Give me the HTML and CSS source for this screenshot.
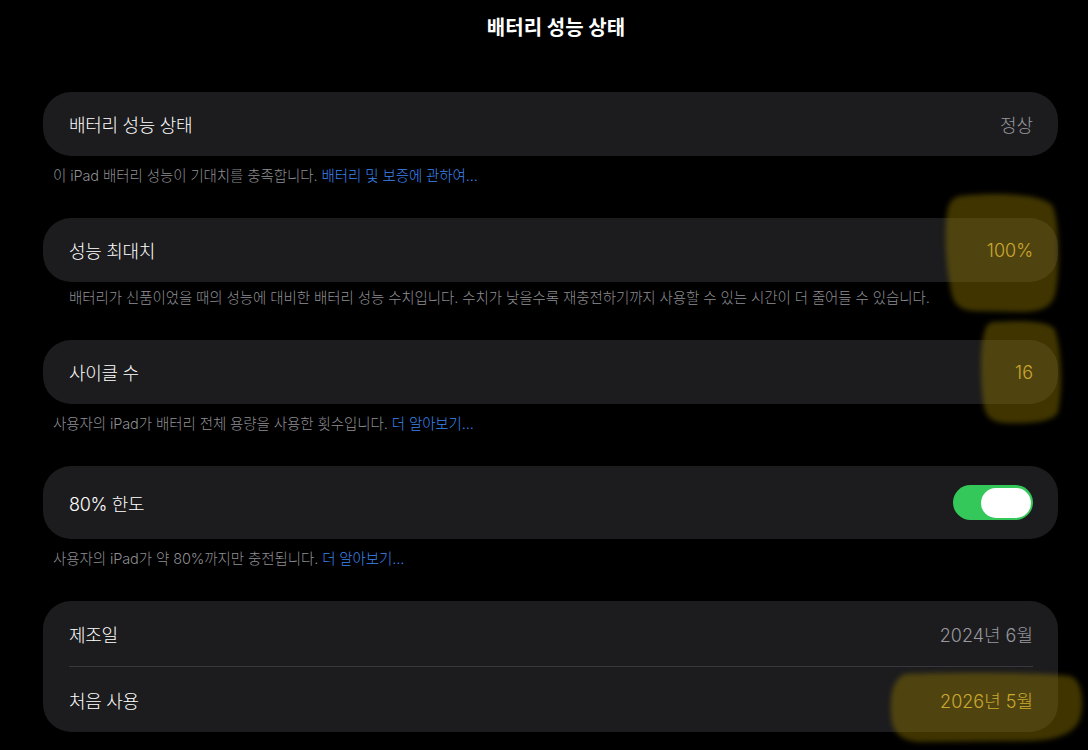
FILE: index.html
```html
<!DOCTYPE html>
<html lang="ko">
<head>
<meta charset="utf-8">
<title>배터리 성능 상태</title>
<link rel="stylesheet" href="styles.css">
</head>
<body>
<div class="page">
  <h1 class="title">배터리 성능 상태</h1>
  <main class="list">
    <section class="group">
      <div class="card">
        <div class="row"><span class="label">배터리 성능 상태</span><span class="value">정상</span></div>
      </div>
      <p class="footer">이 iPad 배터리 성능이 기대치를 충족합니다. <a class="link">배터리 및 보증에 관하여...</a></p>
    </section>
    <section class="group">
      <div class="card">
        <div class="row"><span class="label">성능 최대치</span><span class="value marked">100%</span></div>
      </div>
      <p class="footer indent">배터리가 신품이었을 때의 성능에 대비한 배터리 성능 수치입니다. 수치가 낮을수록 재충전하기까지 사용할 수 있는 시간이 더 줄어들 수 있습니다.</p>
    </section>
    <section class="group">
      <div class="card">
        <div class="row"><span class="label">사이클 수</span><span class="value marked">16</span></div>
      </div>
      <p class="footer">사용자의 iPad가 배터리 전체 용량을 사용한 횟수입니다. <a class="link">더 알아보기...</a></p>
    </section>
    <section class="group">
      <div class="card">
        <div class="row tall"><span class="label">80% 한도</span><span class="toggle"><span class="knob"></span></span></div>
      </div>
      <p class="footer">사용자의 iPad가 약 80%까지만 충전됩니다. <a class="link">더 알아보기...</a></p>
    </section>
    <section class="group">
      <div class="card multi">
        <div class="row"><span class="label">제조일</span><span class="value">2024년 6월</span></div>
        <div class="row"><span class="label">처음 사용</span><span class="value marked">2026년 5월</span></div>
      </div>
    </section>
  </main>
  <svg class="marks" width="1088" height="750" viewBox="0 0 1088 750" aria-hidden="true">
    <path d="M 960 196 C 1000 192, 1040 194, 1052 205 C 1060 220, 1060 270, 1056 290 C 1054 305, 1045 312, 1020 312 L 975 311 C 955 310, 952 300, 950 285 C 945 260, 944 225, 948 208 C 950 200, 955 197, 960 196 Z"/>
    <path d="M 995 322 C 1030 320, 1050 322, 1055 330 C 1062 350, 1063 390, 1058 412 C 1054 422, 1030 424, 1005 423 C 990 422, 984 415, 983 400 C 980 375, 980 345, 985 330 C 987 324, 990 322, 995 322 Z"/>
    <path d="M 905 674 C 960 672, 1040 672, 1070 676 C 1082 680, 1084 700, 1081 715 C 1078 732, 1060 740, 1030 741 L 920 742 C 900 741, 892 732, 891 715 C 890 695, 892 680, 905 674 Z"/>
  </svg>
</div>
</body>
</html>
```
FILE: styles.css
```css
html, body {
  margin: 0;
  padding: 0;
  background: #000;
}

body {
  font-family: "Inter", "Noto Sans CJK KR", sans-serif;
  color: #fff;
}

.page {
  position: relative;
  width: 1088px;
  height: 750px;
  overflow: hidden;
}

.title {
  margin: 0;
  padding-left: 24px;
  height: 56px;
  line-height: 56px;
  text-align: center;
  font-size: 20px;
  font-weight: 700;
  letter-spacing: 0;
  color: #fff;
}

.list {
  margin: 36px 0 0 43px;
  width: 1015px;
  display: flex;
  flex-direction: column;
  gap: 32px;
}

.card {
  background: #1c1c1e;
  border-radius: 28px;
  padding: 0 25px 0 26px;
}

.row {
  display: flex;
  align-items: center;
  justify-content: space-between;
  height: 64px;
  box-sizing: border-box;
}

.row.tall {
  height: 73px;
}

.multi .row {
  height: 65px;
}

.multi .row + .row {
  height: 66px;
  border-top: 1px solid #38383a;
}

.label {
  font-size: 18px;
  font-weight: 300;
  letter-spacing: -0.3px;
  color: #fff;
}

.value {
  font-size: 18px;
  font-weight: 300;
  letter-spacing: 0;
  color: #98989e;
}

.value.marked {
  color: #ffd456;
}

.footer {
  margin: 10px 0 0;
  padding-left: 10px;
  font-size: 14.5px;
  font-weight: 300;
  line-height: 20px;
  letter-spacing: -0.1px;
  color: #8e8e93;
}

.footer.indent {
  margin-top: 6px;
  padding-left: 26px;
}

.link {
  color: #3d85f0;
}

.toggle {
  display: flex;
  justify-content: flex-end;
  align-items: center;
  width: 80px;
  height: 35px;
  padding: 0 2.5px;
  box-sizing: border-box;
  border-radius: 18px;
  background: #34c759;
}

.knob {
  width: 50px;
  height: 30px;
  border-radius: 15px;
  background: #fff;
}

.marks {
  position: absolute;
  left: 0;
  top: 0;
  pointer-events: none;
  filter: blur(2.5px);
}

.marks path {
  fill: rgba(140, 115, 0, 0.46);
}
```
